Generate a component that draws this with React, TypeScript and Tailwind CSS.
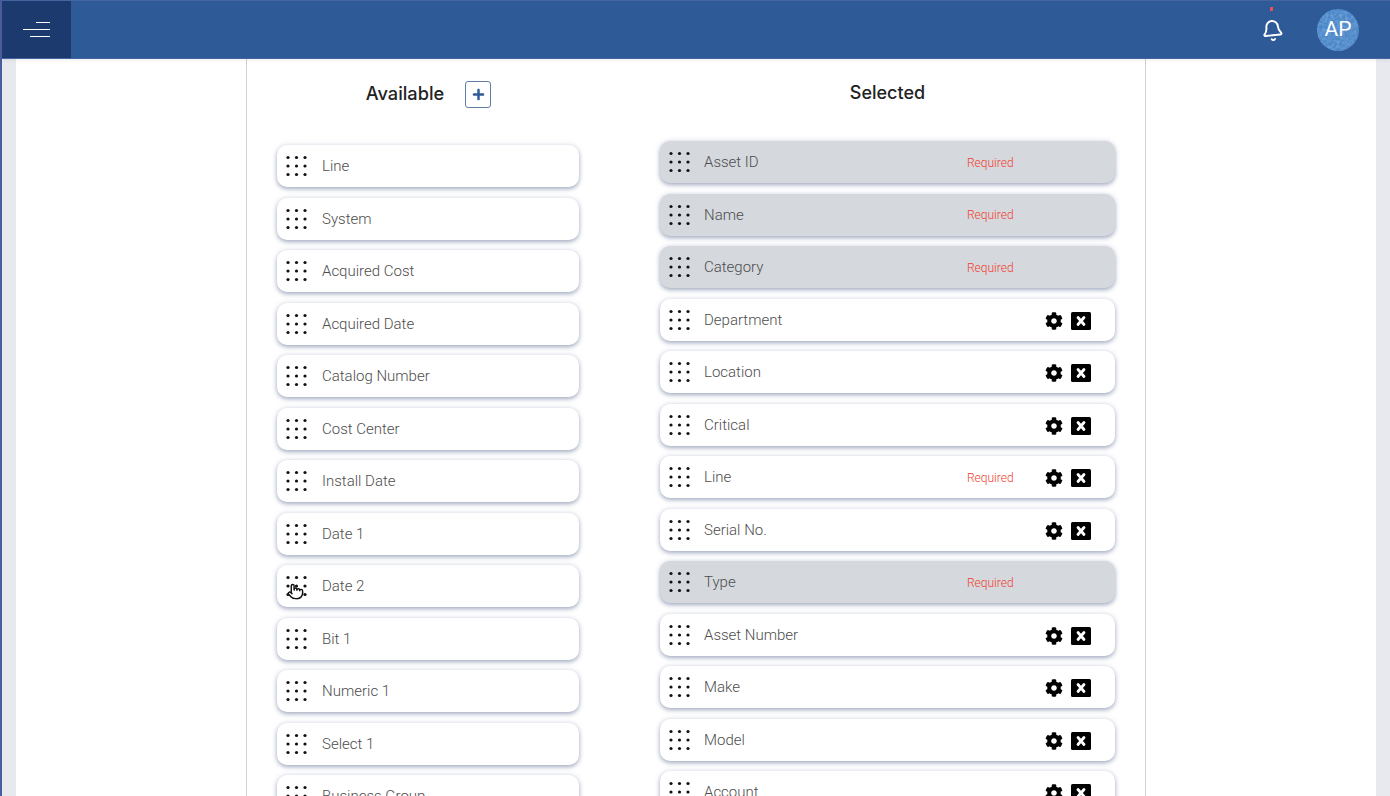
import { Bell, Pointer } from 'lucide-react';
import { FaCog, FaPlus } from 'react-icons/fa';

type SelectedField = {
  name: string;
  required?: boolean;
  locked?: boolean;
};

const available = [
  'Line',
  'System',
  'Acquired Cost',
  'Acquired Date',
  'Catalog Number',
  'Cost Center',
  'Install Date',
  'Date 1',
  'Date 2',
  'Bit 1',
  'Numeric 1',
  'Select 1',
  'Business Group',
];

const selected: SelectedField[] = [
  { name: 'Asset ID', required: true, locked: true },
  { name: 'Name', required: true, locked: true },
  { name: 'Category', required: true, locked: true },
  { name: 'Department' },
  { name: 'Location' },
  { name: 'Critical' },
  { name: 'Line', required: true },
  { name: 'Serial No.' },
  { name: 'Type', required: true, locked: true },
  { name: 'Asset Number' },
  { name: 'Make' },
  { name: 'Model' },
  { name: 'Account' },
];

function Grip() {
  return (
    <svg width="22" height="22" viewBox="0 0 22 22" className="shrink-0 text-[#111]" fill="currentColor">
      {[2.5, 11, 19.5].map((y) =>
        [2, 10.5, 19].map((x) => <circle key={`${x}-${y}`} cx={x} cy={y} r="1.6" />),
      )}
    </svg>
  );
}

function CloseBox() {
  return (
    <svg width="20" height="18" viewBox="0 0 20 18">
      <rect width="20" height="18" rx="1.5" fill="#000" />
      <path d="M7 5.5l6 7M13 5.5l-6 7" stroke="#fff" strokeWidth="2.8" strokeLinecap="round" />
    </svg>
  );
}

function AvailableRow({ name }: { name: string }) {
  return (
    <div className="relative flex h-[42px] w-[302px] shrink-0 items-center gap-[14px] rounded-[10px] bg-white pl-[9px] shadow-[0_2px_4px_rgba(70,90,130,0.45),0_0_6px_rgba(120,130,170,0.18)]">
      <Grip />
      <span className="mt-[1px] text-[15px] font-light text-[#4d4d4d]">{name}</span>
      {name === 'Date 2' && (
        <Pointer size={17} strokeWidth={2} className="absolute left-[10px] top-[18px] fill-white text-[#111]" />
      )}
    </div>
  );
}

function SelectedRow({ field }: { field: SelectedField }) {
  return (
    <div
      className={`flex h-[42px] w-[455px] shrink-0 items-center rounded-[10px] pl-[9px] shadow-[0_2px_4px_rgba(70,90,130,0.45),0_0_6px_rgba(120,130,170,0.18)] ${
        field.locked ? 'bg-[#d5d8dd]' : 'bg-white'
      }`}
    >
      <Grip />
      <span className="ml-[13px] mt-[1px] w-[263px] text-[15px] font-light text-[#4d4d4d]">{field.name}</span>
      <span className="mt-[1px] w-[78px] text-[12px] font-light text-[#f2402f]">
        {field.required ? 'Required' : ''}
      </span>
      {!field.locked && (
        <div className="mt-[2px] flex items-center gap-[8px] text-black">
          <FaCog size={18} />
          <CloseBox />
        </div>
      )}
    </div>
  );
}

export default function App() {
  return (
    <div className="flex h-[796px] w-[1390px] flex-col overflow-hidden border-l-2 border-[#4a5c9c] bg-white font-['Roboto',sans-serif]">
      <header className="relative z-10 flex h-[59px] shrink-0 items-center justify-between border-y border-[#44659f] bg-[#2f5a98] shadow-[0_1px_4px_rgba(0,0,0,0.08)]">
        <button className="flex h-full w-[69px] flex-col items-end justify-center gap-[5.5px] bg-[#1d3a6e] pr-[21px]">
          <span className="h-[1.5px] w-[14px] bg-white" />
          <span className="h-[1.5px] w-[27px] bg-white" />
          <span className="h-[1.5px] w-[20px] bg-white" />
        </button>
        <div className="flex items-center">
          <div className="relative mt-[2px]">
            <Bell size={23} strokeWidth={2} className="-rotate-6 text-white" />
            <span className="absolute left-[9px] top-[-12px] h-[4px] w-[3px] bg-[#e8505b]" />
          </div>
          <div className="relative ml-[33px] mr-[31px] flex h-[42px] w-[42px] items-center justify-center overflow-hidden rounded-full bg-[#4a86c8] text-[21px] text-white">
            <svg width="42" height="42" className="absolute inset-0 opacity-30">
              <filter id="avatar-noise">
                <feTurbulence type="fractalNoise" baseFrequency="0.35" numOctaves="2" />
                <feColorMatrix values="0 0 0 0 0.75  0 0 0 0 0.87  0 0 0 0 1  0 0 0 1.6 -0.5" />
              </filter>
              <rect width="42" height="42" filter="url(#avatar-noise)" />
            </svg>
            <span className="relative">AP</span>
          </div>
        </div>
      </header>

      <div className="flex min-h-0 flex-1">
        <div className="w-[14px] shrink-0 bg-[#e8e9ef]" />
        <main className="min-w-0 flex-1 bg-white pl-[230px]">
          <div className="flex h-full w-[900px] gap-[81px] border-x border-[#cfd2d8] pl-[30px]">
            <section className="flex w-[302px] shrink-0 flex-col">
              <div className="mt-[22px] flex h-[27px] items-center justify-center gap-[21px] pl-[1px]">
                <h2 className="-mt-[2px] font-['Inter',sans-serif] text-[18.2px] font-medium text-[#222]">Available</h2>
                <button className="flex h-[27px] w-[26px] items-center justify-center rounded-[3px] border-[1.5px] border-[#5f7fa8] text-[#2f5a98]">
                  <FaPlus size={13} />
                </button>
              </div>
              <div className="mt-[37px] flex flex-col gap-[10.5px]">
                {available.map((name) => (
                  <AvailableRow key={name} name={name} />
                ))}
              </div>
            </section>

            <section className="flex w-[455px] shrink-0 flex-col">
              <div className="mt-[20px] flex h-[27px] items-center justify-center">
                <h2 className="font-['Inter',sans-serif] text-[18px] font-medium text-[#222]">Selected</h2>
              </div>
              <div className="mt-[35px] flex flex-col gap-[10.5px]">
                {selected.map((field) => (
                  <SelectedRow key={field.name} field={field} />
                ))}
              </div>
            </section>
          </div>
        </main>
        <div className="w-[14px] shrink-0 bg-[#e8e9ef]" />
      </div>
    </div>
  );
}
